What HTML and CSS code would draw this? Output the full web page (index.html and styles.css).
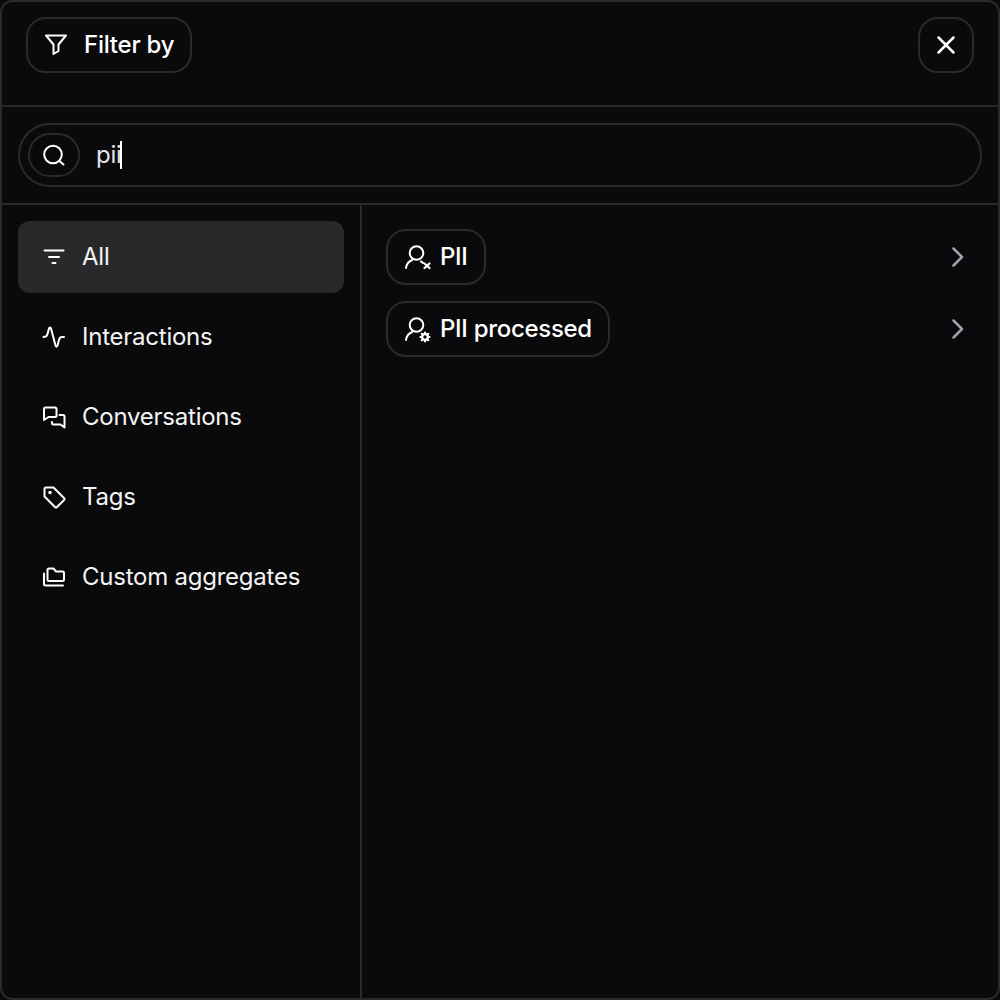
FILE: index.html
```html
<!DOCTYPE html>
<html lang="en">
<head>
<meta charset="utf-8">
<title>Filter by</title>
<link rel="stylesheet" href="styles.css">
</head>
<body>
<div class="panel">
  <header class="header">
    <div class="pill filter-btn">
      <svg class="icon" viewBox="0 0 24 24"><path d="M2 2.500h20l-7.500 9v6.500l-5 3v-9.500z"/></svg>
      <span>Filter by</span>
    </div>
    <div class="close-btn">
      <svg class="icon icon-bold" viewBox="0 0 24 24"><path d="M4.500 4.500l15 15M19.500 4.500l-15 15"/></svg>
    </div>
  </header>
  <div class="search-row">
    <div class="search">
      <div class="search-icon">
        <svg class="icon" viewBox="0 0 24 24"><circle cx="11" cy="11.500" r="8.800"/><path d="M17.500 18l4 3.500"/></svg>
      </div>
      <span class="search-text">pii</span><span class="caret"></span>
    </div>
  </div>
  <div class="body">
    <nav class="sidebar">
      <div class="nav-item active">
        <svg class="icon" viewBox="0 0 24 24"><path d="M2.500 5.500h19M7 12h10M10.500 18h3"/></svg>
        <span>All</span>
      </div>
      <div class="nav-item">
        <svg class="icon" viewBox="0 0 24 24"><path d="M1.500 12c2.500 0 3.500-1 4-3l1.500-5.500c.5-1.500 1.500-1.500 2 0l4.500 17c.5 1.500 1.500 1.500 2 0l1.500-5.500c.5-1.500 1-3 2.500-3h2.500"/></svg>
        <span>Interactions</span>
      </div>
      <div class="nav-item">
        <svg class="icon" viewBox="0 0 24 24"><path d="M2 15V4a1.500 1.500 0 0 1 1.500-1.500h9.500a1.500 1.500 0 0 1 1.500 1.500v6.500a1.500 1.500 0 0 1-1.500 1.500H6.500z"/><path d="M17.500 10h3.500a1.500 1.500 0 0 1 1.500 1.500V22.500l-4-3H11.500a1.500 1.500 0 0 1-1.500-1.500v-1"/></svg>
        <span>Conversations</span>
      </div>
      <div class="nav-item">
        <svg class="icon" viewBox="0 0 24 24"><path d="M2.500 4A1.500 1.500 0 0 1 4 2.500h7.500L22 13a1.500 1.500 0 0 1 0 2.100L15 22a1.500 1.500 0 0 1-2.100 0L2.500 11.500z"/><circle cx="8" cy="7.500" r=".8"/></svg>
        <span>Tags</span>
      </div>
      <div class="nav-item">
        <svg class="icon" viewBox="0 0 24 24"><path d="M5.500 15V5a1.500 1.500 0 0 1 1.500-1.500h4.500l2.500 3h6.500a1.500 1.500 0 0 1 1.500 1.500v6.500a1.500 1.500 0 0 1-1.500 1.500H7a1.500 1.500 0 0 1-1.500-1.500z"/><path d="M2 8.500V19a1.500 1.500 0 0 0 1.500 1.500H21"/></svg>
        <span>Custom aggregates</span>
      </div>
    </nav>
    <main class="results">
      <div class="result">
        <div class="pill chip">
          <svg class="chip-icon" viewBox="0 0 28 28"><circle cx="12.500" cy="10" r="6.800"/><path d="M2 25c.5-3.500 3-6.800 6-8M17 18.500c1 .5 1.500 1 2 1.500"/><path class="heavy" d="M20.500 20.500l5 4.500M25.500 20.500l-5 4.500"/></svg>
          <span>PII</span>
        </div>
        <svg class="chevron" viewBox="0 0 24 24"><path d="M8.500 3.500L17 12l-8.500 8.500"/></svg>
      </div>
      <div class="result">
        <div class="pill chip">
          <svg class="chip-icon" viewBox="0 0 28 28"><circle cx="12.500" cy="10" r="6.800"/><path d="M2 25c.5-3.500 3-6.800 6-8"/><circle class="heavy" cx="21" cy="22" r="2.800"/><path class="heavy" d="M21 17.500v.8M21 25.700v.8M16.500 22h.8M24.700 22h.8M17.800 18.800l.6.6M23.600 24.600l.6.6M17.800 25.200l.6-.6M23.600 19.400l.6-.6"/></svg>
          <span>PII processed</span>
        </div>
        <svg class="chevron" viewBox="0 0 24 24"><path d="M8.500 3.500L17 12l-8.500 8.500"/></svg>
      </div>
    </main>
  </div>
</div>
</body>
</html>
```

FILE: styles.css
```css
* { box-sizing: border-box; }
html, body { margin: 0; height: 100%; background: #0a0a0c; }
body {
  font-family: Inter, "Liberation Sans", sans-serif;
  letter-spacing: -0.24px;
  color: #fff;
}
.panel {
  width: 1000px;
  height: 1000px;
  border: 2px solid #2a2a2c;
  border-radius: 12px;
  background: #0a0a0c;
  display: flex;
  flex-direction: column;
  overflow: hidden;
}
.header {
  height: 105px;
  flex: none;
  padding: 15px 24px 0;
  display: flex;
  justify-content: space-between;
  align-items: flex-start;
  border-bottom: 2px solid #2a2a2c;
}
.icon {
  width: 24px;
  height: 24px;
  flex: none;
  fill: none;
  stroke: #fff;
  stroke-width: 2;
  stroke-linecap: round;
  stroke-linejoin: round;
}
.icon-bold { stroke-width: 2.500; }
.pill {
  height: 56px;
  border: 2px solid #2a2a2c;
  border-radius: 20px;
  display: flex;
  align-items: center;
  font-size: 24px;
  font-weight: 500;
  line-height: 32px;
}
.filter-btn { padding: 0 16px; gap: 16px; }
.close-btn {
  width: 56px;
  height: 56px;
  border: 2px solid #2a2a2c;
  border-radius: 20px;
  display: flex;
  align-items: center;
  justify-content: center;
}
.search-row {
  height: 98px;
  flex: none;
  padding: 16px;
  border-bottom: 2px solid #2a2a2c;
}
.search {
  height: 64px;
  border: 2px solid #2a2a2c;
  border-radius: 32px;
  padding: 0 8px;
  display: flex;
  align-items: center;
}
.search-icon {
  width: 52px;
  height: 44px;
  border: 2px solid #2a2a2c;
  border-radius: 22px;
  display: flex;
  align-items: center;
  justify-content: center;
  flex: none;
}
.search-text {
  margin-left: 16px;
  font-size: 24px;
  line-height: 32px;
  color: #e4e4e7;
}
.caret { width: 2px; height: 28px; margin-left: -2px; background: #fff; }
.body { flex: 1; display: flex; min-height: 0; }
.sidebar {
  width: 360px;
  flex: none;
  padding: 16px;
  border-right: 2px solid #2a2a2c;
  display: flex;
  flex-direction: column;
  gap: 8px;
}
.nav-item {
  height: 72px;
  border-radius: 12px;
  padding: 0 24px;
  display: flex;
  align-items: center;
  gap: 16px;
  font-size: 24px;
  line-height: 32px;
  color: #f4f4f5;
}
.nav-item.active { background: #29292b; }
.results {
  flex: 1;
  padding: 24px;
  display: flex;
  flex-direction: column;
  gap: 16px;
}
.result {
  height: 56px;
  display: flex;
  align-items: center;
  justify-content: space-between;
}
.chip { padding: 0 16px; gap: 8px; letter-spacing: -0.3px; }
.chip-icon {
  width: 28px;
  height: 28px;
  flex: none;
  fill: none;
  stroke: #fff;
  stroke-width: 2;
  stroke-linecap: round;
  stroke-linejoin: round;
}
.chip-icon .heavy { stroke-width: 2.200; }
.chevron {
  width: 24px;
  height: 24px;
  margin-right: 5px;
  fill: none;
  stroke: #a1a1aa;
  stroke-width: 2.500;
  stroke-linecap: round;
  stroke-linejoin: round;
}
```
